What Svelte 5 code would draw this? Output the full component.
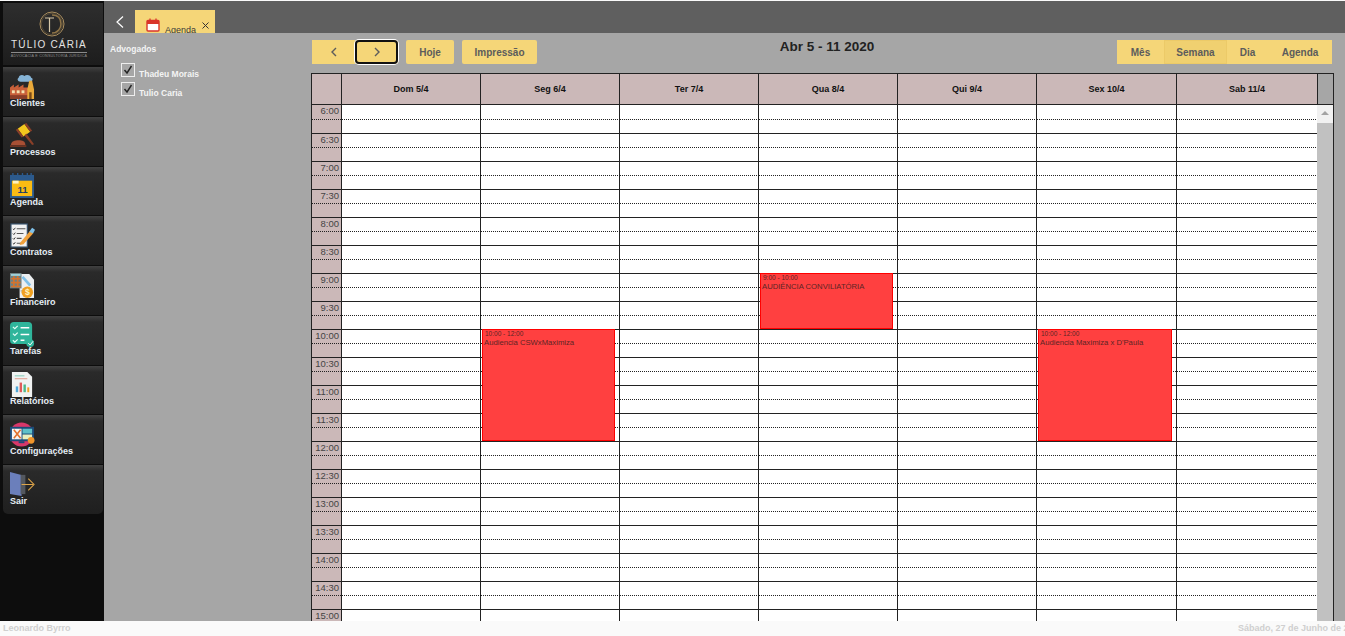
<script lang="ts">
	const menu = ['Clientes', 'Processos', 'Agenda', 'Contratos', 'Financeiro', 'Tarefas', 'Relatórios', 'Configurações', 'Sair'];
	const days = ['Dom 5/4', 'Seg 6/4', 'Ter 7/4', 'Qua 8/4', 'Qui 9/4', 'Sex 10/4', 'Sab 11/4'];
	const lawyers = ['Thadeu Morais', 'Tulio Caria'];
	const times: string[] = [];
	for (let h = 6; h <= 15; h++) {
		times.push(h + ':00');
		times.push(h + ':30');
	}

	// day = column index, start/span in half-hour rows from 6:00
	const events = [
		{ day: 1, start: 8, span: 4, time: '10:00 - 12:00', title: 'Audiencia CSWxMaximiza' },
		{ day: 3, start: 6, span: 2, time: '9:00 - 10:00', title: 'AUDIÊNCIA CONVILIATÓRIA' },
		{ day: 5, start: 8, span: 4, time: '10:00 - 12:00', title: 'Audiencia Maximiza x D\'Paula' }
	];
</script>

<div class="page">
	<div class="upper">
		<aside class="sidebar">
			<div class="logo">
				<svg class="logo-mark" viewBox="0 0 26 26" width="26" height="26" fill="none">
					<circle cx="13" cy="13" r="12" stroke="#a98d5e" stroke-width="1" />
					<circle cx="13" cy="13" r="10.6" stroke="#6f5c3c" stroke-width="0.6" />
					<path d="M6 7h9M10.5 7v14" stroke="#d8c8a8" stroke-width="1.2" />
					<path d="M13 4c7 0 9 5 9 9s-3 9-9 9" stroke="#8d7347" stroke-width="1.6" />
				</svg>
				<div class="logo-name">TÚLIO CÁRIA</div>
				<div class="logo-sub">ADVOCACIA E CONSULTORIA JURÍDICA</div>
			</div>
			{#each menu as item}
				<a class="menu-item" href="#top">
					<svg class="menu-icon" viewBox="0 0 26 26" width="25" height="25">
						{#if item === 'Clientes'}
							<path d="M9 4c0-3 4-4 6-2 2-2 7-1 7 2 2 0 2 3 0 4H11C8 8 7 5 9 4z" fill="#86b4d6" />
							<path d="M0 14l4-3v3l5-3v3l5-3v3h5v12H0z" fill="#c9603a" />
							<rect x="2" y="17" width="3" height="3" fill="#f4e2b0" /><rect x="7" y="17" width="3" height="3" fill="#f4e2b0" /><rect x="12" y="17" width="3" height="3" fill="#f4e2b0" />
							<rect x="0" y="22" width="19" height="4" fill="#8a3f28" />
							<path d="M20 7h3l2 9v10h-7V16z" fill="#e9a93a" />
							<rect x="20" y="19" width="2.5" height="7" fill="#7a4a18" />
						{:else if item === 'Processos'}
							<path d="M8 6l7-5 6 8-7 5z" fill="#f3c71e" />
							<path d="M15 1l2-1 6 8-2 1z" fill="#8a3f28" />
							<path d="M6 7l2-1 6 8-2 1z" fill="#8a3f28" />
							<path d="M17 11l8 11-2 1-8-10z" fill="#8a3f28" />
							<path d="M1 23c0-4 4-5 8-5s7 1 7 5z" fill="#a84f34" />
							<rect x="0" y="23" width="17" height="2" fill="#6d3322" />
						{:else if item === 'Agenda'}
							<rect x="0" y="2" width="25" height="24" fill="#2c5a8c" />
							<rect x="2" y="8" width="21" height="16" fill="#fbbc13" />
							<path d="M3 8h6v3H3z" fill="#fff2c0" />
							<path d="M3 3V0M8 3V0M13 3V0M18 3V0M22 3V0" stroke="#2c5a8c" stroke-width="1.4" />
							<text x="13" y="21" class="cal-num">11</text>
						{:else if item === 'Contratos'}
							<rect x="1" y="1" width="17" height="24" fill="#f2f2f2" stroke="#35506b" stroke-width="1.2" />
							<path d="M7 6h9M7 11h7M7 16h5M7 21h6" stroke="#555" stroke-width="1.1" />
							<path d="M3 6l1 1 1.5-2M3 11l1 1 1.5-2M3 16l1 1 1.5-2M3 21l1 1 1.5-2" stroke="#222" stroke-width="0.9" fill="none" />
							<path d="M11 20l10-12 3 3-10 11-4 1z" fill="#f0a13c" />
							<path d="M20 9l3-4 3 2-2 4z" fill="#7fc0e8" />
						{:else if item === 'Financeiro'}
							<path d="M10 1h10l5 6v19H10z" fill="#eceff1" />
							<rect x="0" y="0" width="12" height="16" fill="#6f8082" />
							<path d="M1 6h10M1 10h10M1 14h10M4 3v12M8 3v12" stroke="#d4732d" stroke-width="1.7" />
							<rect x="1" y="1" width="10" height="2" fill="#9fd0d8" />
							<path d="M14 3l8 9-2 2-8-9z" fill="#7fc0e8" />
							<rect x="11" y="18" width="5" height="1.2" fill="#a0a6a8" />
							<circle cx="18" cy="20" r="6" fill="#f0a020" />
							<text x="18" y="23" class="coin">$</text>
						{:else if item === 'Tarefas'}
							<rect x="0" y="0" width="23" height="23" rx="4" fill="#2fb59b" />
							<path d="M3 5l2 2 3-3M3 12l2 2 3-3M3 19l2 2 3-3" stroke="#e8fff8" stroke-width="1.2" fill="none" />
							<path d="M11 6h9M11 13h9M11 19h4" stroke="#fff" stroke-width="1.4" />
							<circle cx="21" cy="22" r="4" fill="#2fb59b" />
							<path d="M19 22l2 2 3-4" stroke="#fff" stroke-width="1" fill="none" />
						{:else if item === 'Relatórios'}
							<path d="M2 0h16l5 5v21H2z" fill="#f0f2f2" />
							<path d="M5 4h10" stroke="#7ccbb4" stroke-width="1" /><path d="M5 7h13" stroke="#e0998a" stroke-width="1" />
							<rect x="6" y="15" width="2.5" height="6" fill="#4fa8d8" /><rect x="10" y="11" width="2.5" height="10" fill="#e05a5a" /><rect x="14" y="13" width="2.5" height="8" fill="#4cb88c" /><rect x="18" y="16" width="2" height="5" fill="#f0a020" />
						{:else if item === 'Configurações'}
							<circle cx="12" cy="13" r="12.5" fill="#d8376a" />
							<rect x="0" y="5" width="25" height="15" fill="#1c4a78" />
							<rect x="2" y="7" width="10" height="11" fill="#f4f4f4" />
							<rect x="13" y="7" width="10" height="5" fill="#5fc0c8" /><rect x="13" y="13" width="10" height="5" fill="#e8f0c0" />
							<path d="M4 8l7 9M11 8l-7 9" stroke="#e0702c" stroke-width="1.6" />
							<rect x="9" y="20" width="6" height="2" fill="#1c4a78" />
							<circle cx="22" cy="19" r="3.5" fill="#f0952a" />
						{:else}
							<path d="M0 0l12 3v22L0 23z" fill="#6b7fbb" />
							<rect x="11" y="3" width="5" height="20" fill="#54585f" />
							<path d="M12 13h12M19 7l6 6-6 6" stroke="#e0a64a" stroke-width="1.1" fill="none" />
						{/if}
					</svg>
					<span class="menu-label">{item}</span>
				</a>
			{/each}
		</aside>

		<div class="workspace">
			<div class="tabbar">
				<svg class="back" viewBox="0 0 8 12" width="8" height="12" fill="none">
					<path d="M7 0.5L1 6l6 5.5" stroke="#fff" stroke-width="1.2" />
				</svg>
				<div class="tab">
					<svg viewBox="0 0 14 14" width="14" height="14" fill="none">
						<rect x="1" y="2.5" width="12" height="10.5" rx="1" stroke="#d9352a" stroke-width="1.4" fill="#fff" />
						<rect x="1" y="2.5" width="12" height="3.5" fill="#d9352a" />
						<path d="M4 0.5v2M10 0.5v2" stroke="#d9352a" stroke-width="1.3" />
					</svg>
					<span class="tab-label">Agenda</span>
					<svg class="tab-close" viewBox="0 0 7 7" width="7" height="7" fill="none">
						<path d="M0.5 0.5l6 6M6.5 0.5l-6 6" stroke="#333" stroke-width="1" />
					</svg>
				</div>
			</div>

			<div class="content">
				<div class="filters">
					<div class="filters-title">Advogados</div>
					{#each lawyers as name}
						<label class="lawyer">
							<span class="box">
								<svg viewBox="0 0 12 12" width="12" height="12" fill="none"><path d="M2.5 6l2.5 3 4.5-7" stroke="#222" stroke-width="1.4" /></svg>
							</span>
							<span class="lawyer-name">{name}</span>
						</label>
					{/each}
				</div>

				<div class="calendar">
					<div class="toolbar">
						<div class="tool-group">
							<button class="btn nav"><svg viewBox="0 0 8 10" width="8" height="10" fill="none"><path d="M6 1L2 5l4 4" stroke="#5c5c5c" stroke-width="1.4" /></svg></button>
							<button class="btn nav focused"><svg viewBox="0 0 8 10" width="8" height="10" fill="none"><path d="M2 1l4 4-4 4" stroke="#5c5c5c" stroke-width="1.4" /></svg></button>
						</div>
						<button class="btn hoje">Hoje</button>
						<button class="btn print">Impressão</button>
						<h2 class="range">Abr 5 - 11 2020</h2>
						<div class="tool-group views">
							<button class="btn mes">Mês</button>
							<button class="btn semana">Semana</button>
							<button class="btn dia">Dia</button>
							<button class="btn agenda">Agenda</button>
						</div>
					</div>

					<div class="table">
						<div class="head">
							<div class="corner"></div>
							{#each days as day}
								<div class="day-head">{day}</div>
							{/each}
							<div class="head-end"></div>
						</div>
						<div class="body">
							<div class="grid">
								<div class="times">
									{#each times as t}
										<div class="time-cell">{t}</div>
									{/each}
								</div>
								<div class="columns">
									{#each days as day, d}
										<div class="col">
											{#each times as t}
												<div class="slot"></div>
											{/each}
											{#each events.filter((e) => e.day === d) as ev}
												<div class="event" style="top: {ev.start * 28}px; height: {ev.span * 28}px">
													<div class="event-time">{ev.time}</div>
													<div class="event-title">{ev.title}</div>
												</div>
											{/each}
										</div>
									{/each}
								</div>
							</div>
							<div class="scrollbar">
								<div class="arrow"></div>
								<div class="thumb"></div>
							</div>
						</div>
					</div>
				</div>
			</div>
		</div>
	</div>
	<footer class="footer">
		<span class="user">Leonardo Byrro</span>
		<span>Sábado, 27 de Junho de 2020</span>
	</footer>
</div>

<style>
	:global(body) {
		margin: 0;
		overflow: hidden;
		font-family: "Liberation Sans", Arial, sans-serif;
	}

	.page {
		display: flex;
		flex-direction: column;
		height: 100vh;
		box-sizing: border-box;
		padding-top: 1px;
		background: #fafafa;
	}

	.upper {
		display: flex;
		flex: 1;
		min-height: 0;
	}

	.sidebar {
		flex: 0 0 104px;
		box-sizing: border-box;
		padding: 2px 1px 0 3px;
		background: #0d0d0d;
		display: flex;
		flex-direction: column;
		gap: 1px;
	}

	.logo {
		height: 62px;
		margin-bottom: 1px;
		background: linear-gradient(#2e2e2e, #1d1d1d);
		display: flex;
		flex-direction: column;
		align-items: center;
		padding: 8px 8px 0 0;
		box-sizing: border-box;
		color: #e4e4e4;
	}

	.logo-mark {
		flex: none;
		margin-left: 5px;
	}

	.logo-name {
		font-size: 10px;
		letter-spacing: 1.2px;
		line-height: 12px;
		margin-top: 2px;
		padding-bottom: 1px;
		border-bottom: 1px solid #8a8a8a;
	}

	.logo-sub {
		font-size: 3.7px;
		line-height: 6px;
		letter-spacing: 0.2px;
		color: #8d8d8d;
		white-space: nowrap;
	}

	.menu-item {
		height: 48.75px;
		box-sizing: border-box;
		padding: 6.5px 0 0 7px;
		background: linear-gradient(#414141, #2a2a2a 6px, #1f1f1f);
		text-decoration: none;
		display: flex;
		flex-direction: column;
		color: #e6eef5;
		font-size: 9px;
		font-weight: 700;
	}

	.menu-item:last-child {
		border-radius: 0 0 5px 5px;
	}

	.menu-icon {
		flex: none;
	}

	.menu-label {
		line-height: 11px;
		margin-top: -1px;
	}

	.cal-num {
		font-size: 10px;
		font-weight: 700;
		fill: #1f3f66;
		text-anchor: middle;
	}

	.coin {
		font-size: 9px;
		font-weight: 700;
		fill: #fff3c0;
		text-anchor: middle;
	}

	.workspace {
		flex: 1;
		min-width: 0;
		display: flex;
		flex-direction: column;
		background: #a6a6a6;
	}

	.tabbar {
		flex: 0 0 32px;
		box-sizing: border-box;
		background: #5f5f5f;
		display: flex;
		align-items: flex-end;
		padding-left: 12px;
	}

	.back {
		margin: 0 11px 5px 0;
	}

	.tab {
		width: 80px;
		height: 23px;
		box-sizing: border-box;
		background: #f5d678;
		padding: 8px 0 0 11px;
		display: flex;
		overflow: hidden;
		font-size: 9px;
		color: #3a3a3a;
	}

	.tab-label {
		margin: 7px 0 0 5px;
		line-height: 11px;
	}

	.tab-close {
		margin: 4px 0 0 6px;
		flex: none;
	}

	.content {
		flex: 1;
		min-height: 0;
		display: flex;
	}

	.filters {
		flex: 0 0 207px;
		box-sizing: border-box;
		padding: 11px 0 0 6px;
		color: #f4f4f4;
		font-size: 8.5px;
		font-weight: 700;
	}

	.filters-title {
		line-height: 11px;
		margin-bottom: 8px;
	}

	.lawyer {
		display: flex;
		align-items: flex-end;
		gap: 4px;
		height: 14px;
		margin: 0 0 5px 11px;
		line-height: 10px;
	}

	.lawyer-name {
		margin-bottom: -2px;
	}

	.box {
		width: 14px;
		height: 14px;
		box-sizing: border-box;
		border: 1px solid #eee;
		flex: none;
		display: block;
	}

	.box svg {
		display: block;
	}

	.calendar {
		flex: 1;
		min-width: 0;
		padding-right: 11px;
		display: flex;
		flex-direction: column;
	}

	.toolbar {
		height: 24px;
		margin: 7px 2px 9px 1px;
		display: flex;
		align-items: stretch;
		gap: 8px;
	}

	.tool-group {
		display: flex;
	}

	.btn {
		border: 0;
		padding: 0;
		margin: 0;
		background: #f5d678;
		color: #5c5c5c;
		font: 700 10px "Liberation Sans", Arial, sans-serif;
		border-radius: 2px;
		display: flex;
		align-items: center;
		justify-content: center;
	}

	.tool-group .btn {
		border-radius: 0;
	}

	.nav {
		width: 43px;
	}

	.tool-group .focused {
		outline: 2px solid #111;
		outline-offset: -2px;
		box-shadow: 0 0 0 1px #fff;
		border-radius: 4px;
		position: relative;
	}

	.hoje {
		width: 48px;
	}

	.print {
		width: 75px;
	}

	.range {
		flex: 1;
		margin: -3px 0 0;
		text-align: center;
		font-size: 13.5px;
		line-height: 20px;
		color: #222;
	}

	.mes {
		width: 47px;
	}

	.tool-group .semana {
		width: 63px;
		background: #f0d070;
		box-shadow: inset 0 0 0 1px #ecca68;
	}

	.dia {
		width: 41px;
	}

	.agenda {
		width: 64px;
	}

	.table {
		flex: 1;
		min-height: 0;
		display: flex;
		flex-direction: column;
		border: 1px solid #222;
		border-bottom: 0;
		background: #fff;
	}

	.head {
		flex: 0 0 31px;
		display: grid;
		grid-template-columns: 30px repeat(5, 139px) 140px 141px 1fr;
		background: #cbb8b8;
		border-bottom: 1px solid #222;
		box-sizing: border-box;
	}

	.corner,
	.day-head {
		border-right: 1px solid #222;
	}

	.day-head {
		display: flex;
		align-items: center;
		justify-content: center;
		font-size: 9px;
		font-weight: 700;
		color: #111;
	}

	.head-end {
		background: #a6a6a6;
	}

	.body {
		flex: 1;
		min-height: 0;
		display: flex;
		overflow: hidden;
	}

	.grid {
		flex: 1;
		min-width: 0;
		display: flex;
		align-items: flex-start;
	}

	.times {
		flex: 0 0 30px;
		box-sizing: border-box;
		background: #cbb8b8;
		border-right: 1px solid #222;
	}

	.time-cell,
	.slot {
		height: 28px;
		box-sizing: border-box;
		border-bottom: 1px solid #222;
		background-image: repeating-linear-gradient(90deg, #222 0 1px, transparent 1px 2px);
		background-size: 100% 1px;
		background-position: 0 13px;
		background-repeat: no-repeat;
	}

	.time-cell:first-child,
	.slot:first-child {
		height: 29px;
		background-position: 0 14px;
	}

	.time-cell {
		padding: 0 2px 0 0;
		text-align: right;
		font-size: 9.5px;
		line-height: 11px;
		color: #444;
	}

	.columns {
		flex: 1;
		display: grid;
		grid-template-columns: repeat(5, 139px) 140px 140px;
	}

	.col {
		position: relative;
		border-right: 1px solid #222;
	}

	.col:last-child {
		border-right: 0;
	}

	.event {
		position: absolute;
		left: 1px;
		right: 4px;
		box-sizing: border-box;
		border: 1px solid #f00;
		background: #ff4040;
		color: #5a2525;
		padding: 0 1px;
		overflow: hidden;
		white-space: nowrap;
	}

	.event-time {
		font-size: 6.5px;
		line-height: 7px;
		padding-left: 1px;
	}

	.event-title {
		font-size: 7.7px;
		line-height: 11px;
	}

	.scrollbar {
		flex: 0 0 16px;
		background: #f1f1f1;
		display: flex;
		flex-direction: column;
		align-items: center;
		padding-top: 6px;
		box-sizing: border-box;
	}

	.arrow {
		flex: none;
		width: 0;
		height: 0;
		border: 4px solid transparent;
		border-top: 0;
		border-bottom: 4px solid #a3a3a3;
	}

	.thumb {
		flex: 1;
		width: 100%;
		margin-top: 8px;
		background: #c1c1c1;
	}

	.footer {
		flex: 0 0 15px;
		display: flex;
		overflow: hidden;
		padding-left: 3px;
		font-size: 9px;
		font-weight: 700;
		line-height: 15px;
		color: #cfcfcf;
		white-space: nowrap;
	}

	.user {
		flex: 0 0 1235px;
	}
</style>
